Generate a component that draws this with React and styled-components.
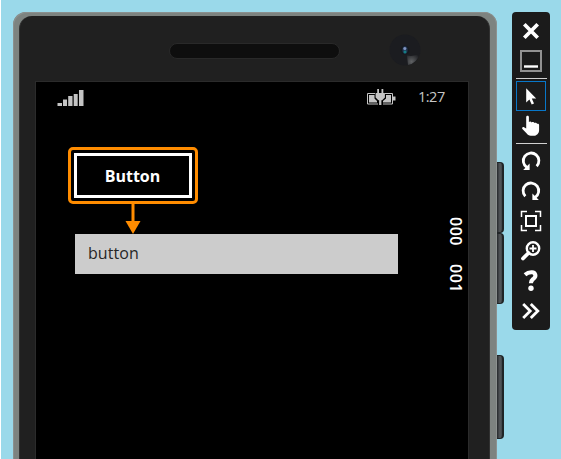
import React from "react";
import styled, { createGlobalStyle } from "styled-components";

const GlobalStyle = createGlobalStyle`
  * { box-sizing: border-box; }
  body { margin: 0; background: #9ad9ea; overflow: hidden; }
`;

const Desktop = styled.main`
  display: flex;
  align-items: flex-start;
  height: 459px;
  padding: 12px 0 0 12px;
  overflow: hidden;
  border-left: 1px solid #fff;
  background: #9ad9ea;
  font-family: "Open Sans", "Noto Sans", sans-serif;
`;

const PhoneFrame = styled.section`
  width: 484px;
  height: 520px;
  flex: none;
  padding: 4px 7px 0 6px;
  border-radius: 13px 13px 0 0;
  background: #7d8380;
  box-shadow: inset 1px 1px 0 #8b908e, inset -1px 0 0 #8d9290;
`;

const PhoneFace = styled.div`
  height: 100%;
  padding: 0 20px 0 16px;
  border-left: 1px solid #303030;
  border-right: 1px solid #303030;
  border-radius: 13px 13px 0 0;
  background: #202020;
`;

const Bezel = styled.header`
  display: flex;
  height: 65px;
  padding: 15px 0 0 133px;
`;

const Speaker = styled.div`
  width: 171px;
  height: 16px;
  margin-top: 12px;
  border: 1px solid #292929;
  border-radius: 8px;
  background: #0e0e0e;
`;

const CameraIcon = styled.svg`
  width: 32px;
  height: 32px;
  margin: 3px 0 0 49px;
`;

const Screen = styled.div`
  height: 439px;
  border: 1px solid #2b2b2b;
  border-bottom: 0;
  margin-left: -1px;
  background: #000;
`;

const StatusBar = styled.div`
  display: flex;
  align-items: center;
  height: 31px;
  padding: 0 22px 0 21px;
`;

const SignalIcon = styled.svg`
  width: 28px;
  height: 19px;
  flex: none;
  margin-top: -1px;
`;

const BatteryIcon = styled.svg`
  width: 31px;
  height: 18px;
  margin: -2px 0 0 auto;
`;

const Clock = styled.time`
  width: 28px;
  margin: -2px 0 0 21px;
  color: #c6c6c6;
  font: 14.5px/20px "Open Sans", sans-serif;
  letter-spacing: -0.5px;
  white-space: nowrap;
`;

const ScreenBody = styled.div`
  display: flex;
  justify-content: space-between;
  padding: 34px 4px 0 32px;
`;

const AppContent = styled.div`
  width: 330px;
`;

const Highlight = styled.div`
  width: 130px;
  height: 57px;
  padding: 3px;
  border: 3px solid #ff8c00;
  border-radius: 5px;
`;

const AppButton = styled.button`
  display: flex;
  align-items: center;
  justify-content: center;
  width: 118px;
  height: 45px;
  padding: 1px 1px 0 0;
  border: 3px solid #fff;
  background: #000;
  color: #fff;
  font: 700 16px/22px "Open Sans", sans-serif;
  letter-spacing: 0;
`;

const ArrowIcon = styled.svg`
  display: block;
  width: 16px;
  height: 30px;
  margin-left: 57px;
`;

const Output = styled.div`
  width: 323px;
  height: 40px;
  margin-left: 7px;
  padding: 8px 13px;
  background: #ccc;
  color: #262626;
  font: 16px/22px "Open Sans", sans-serif;
  letter-spacing: 0.05px;
`;

const FrameCounters = styled.div`
  display: flex;
  gap: 18.5px;
  width: 16px;
  padding-top: 70px;
  writing-mode: vertical-rl;
  color: #fff;
  font: 600 16px/16px "Open Sans", sans-serif;
  letter-spacing: 0.5px;
`;

const SideKeys = styled.div`
  width: 7px;
  flex: none;
  padding-top: 150px;
`;

const Key = styled.div`
  height: ${({ $height }) => $height}px;
  margin-top: ${({ $gap }) => $gap || 0}px;
  border: 1px solid #202527;
  border-left: 0;
  border-right-width: 2px;
  border-radius: 0 4px 4px 0;
  background: linear-gradient(90deg, #25292b, #55595c 60%, #3f4447);
`;

const Toolbar = styled.nav`
  display: flex;
  flex-direction: column;
  width: 38px;
  margin-left: 8px;
  padding: 4px;
  border-radius: 4px;
  background: #1b1b1b;
`;

const ToolButton = styled.button`
  width: 30px;
  height: 30px;
  padding: 0;
  border: 1px solid ${({ $active }) => ($active ? "#0877c9" : "transparent")};
  background: transparent;
`;

const ToolIcon = styled.svg`
  display: block;
  width: 28px;
  height: 28px;
  fill: none;
  stroke: #fff;
`;

const Divider = styled.hr`
  width: 31px;
  height: 1px;
  margin: 2px 0;
  border: 0;
  background: #d0d0d0;
`;

/* Every drawing is centred on 14,14 of a 28px grid. */
const tools = [
  { label: "Close", art: <path d="M7.3 7.3 20.7 20.7M20.7 7.3 7.3 20.7" strokeWidth="3.7" /> },
  {
    label: "Minimize",
    art: (
      <>
        <path d="M4 4h20v20H4z" stroke="#929292" strokeWidth="2" />
        <path d="M7 19.5h14" strokeWidth="2.4" />
      </>
    ),
    divider: true,
  },
  {
    label: "Pointer",
    active: true,
    art: <path d="M9.2 6.2v14.2l3.2-3 2.3 5 2.3-1-2.2-4.9h4.4z" fill="#fff" stroke="none" />,
  },
  {
    label: "Touch",
    art: (
      <path
        d="M9.2 5.2c0-1.9 2.7-1.9 2.7 0v4.9c.6-.8 2.3-.7 2.7.3.8-.7 2.4-.4 2.8.5.9-.6 2.5-.1 2.7.9 1-.4 2 .1 2 1.2v5.2c0 3-2.4 5.6-5.5 5.6h-2.8c-1.9 0-3.3-1-4.3-2.5L5.4 17c-1-1.3.8-2.5 2-1.6l1.8 1.2z"
        fill="#fff"
        stroke="none"
      />
    ),
    divider: true,
  },
  {
    label: "Rotate left",
    art: (
      <>
        <path d="M9.8 20.3A7.8 7.8 0 1 1 19.7 19.2" strokeWidth="2.8" />
        <path d="M12.6 16.6V23H6.2z" fill="#fff" stroke="none" />
      </>
    ),
  },
  {
    label: "Rotate right",
    art: (
      <>
        <path d="M18.2 20.3A7.8 7.8 0 1 0 8.3 19.2" strokeWidth="2.8" />
        <path d="M15.4 16.6V23H21.8z" fill="#fff" stroke="none" />
      </>
    ),
  },
  {
    label: "Fit to screen",
    art: (
      <>
        <path d="M9 9h10v10H9z" strokeWidth="2" />
        <path
          d="M4.5 10V4.5H10M18 4.5H23.5V10M23.5 18V23.5H18M10 23.5H4.5V18"
          stroke="#fff"
          strokeWidth="1.5"
        />
      </>
    ),
  },
  {
    label: "Zoom",
    art: (
      <>
        <circle cx="16" cy="11.5" r="6.2" strokeWidth="2.4" />
        <path d="M16 8v7M12.5 11.5h7" strokeWidth="1.8" />
        <path d="M11.5 16 6 21.5" strokeWidth="3.8" strokeLinecap="round" />
      </>
    ),
  },
  {
    label: "Help",
    art: (
      <>
        <path
          d="M8 7.7C10 6 12.3 5.1 15 5.3c3.7.3 4.2 3.9 2.2 5.8-1.8 1.8-3.2 2-3.3 5.1"
          strokeWidth="4.1"
        />
        <circle cx="14" cy="21.3" r="2.7" fill="#fff" stroke="none" />
      </>
    ),
  },
  {
    label: "More tools",
    art: <path d="m6.2 7 7 7-7 7M13.8 7l7 7-7 7" strokeWidth="2.8" />,
  },
];

function Signal() {
  return (
    <SignalIcon viewBox="0 0 28 19" fill="#c4c4c4">
      <path d="M.5 15h4.5v3H.5zM6 11.5h4V18H6zM11.2 8h4.3v10h-4.3zM16.7 6h4v12h-4zM22 2h4.5v16H22z" />
    </SignalIcon>
  );
}

function Battery() {
  return (
    <BatteryIcon viewBox="0 0 31 18">
      <path d="M9 5.5H1.5v10.5H12M17 16h9.5V5.5H19" fill="none" stroke="#c4c4c4" />
      <path d="M3 7h5.5v3.5l2.5 2.5v1.5H3zM20 7h5v7.5h-8V13l3-2.5zM27 8.5h2.5v4H27z" fill="#c4c4c4" />
      <path d="M11.2 1h1.8v4h2.5V1h1.8v4h1.6v4.5l-2.8 2.8h-.7V17h-2.3v-4.7h-.7L9.6 9.5V5h1.6z" fill="#c4c4c4" />
    </BatteryIcon>
  );
}

function Camera() {
  return (
    <CameraIcon viewBox="0 0 32 32">
      <defs>
        <radialGradient id="glint" cx="22.5" cy="27.5" r="9" gradientUnits="userSpaceOnUse">
          <stop offset="0" stopColor="#606264" />
          <stop offset="1" stopColor="#1b1c20" />
        </radialGradient>
      </defs>
      <circle cx="16" cy="16" r="15.5" fill="#1b1c20" />
      <path d="M18 21.5 22 22l8.5-1.5A15.5 15.5 0 0 1 19 31.1z" fill="url(#glint)" />
      <circle cx="16" cy="16" r="4.5" fill="#15191e" />
      <ellipse cx="16" cy="16" rx="2.6" ry="3.7" fill="#233653" />
      <circle cx="15.8" cy="14.5" r="1.5" fill="#8295c2" />
      <circle cx="16" cy="18" r="1.4" fill="#147e83" />
    </CameraIcon>
  );
}

export default function App() {
  return (
    <>
      <GlobalStyle />
      <Desktop>
        <PhoneFrame>
          <PhoneFace>
            <Bezel>
              <Speaker />
              <Camera />
            </Bezel>
            <Screen>
              <StatusBar>
                <Signal />
                <Battery />
                <Clock>1:27</Clock>
              </StatusBar>
              <ScreenBody>
                <AppContent>
                  <Highlight>
                    <AppButton>Button</AppButton>
                  </Highlight>
                  <ArrowIcon viewBox="0 0 16 30">
                    <path d="M8 0v18" stroke="#ff8c00" strokeWidth="3" />
                    <path d="M.5 17h15L8 30z" fill="#ff8c00" />
                  </ArrowIcon>
                  <Output>button</Output>
                </AppContent>
                <FrameCounters>
                  <span>000</span>
                  <span>001</span>
                </FrameCounters>
              </ScreenBody>
            </Screen>
          </PhoneFace>
        </PhoneFrame>
        <SideKeys>
          <Key $height={71} />
          <Key $height={71} />
          <Key $height={84} $gap={51} />
        </SideKeys>
        <Toolbar>
          {tools.map(({ label, art, active, divider }) => (
            <React.Fragment key={label}>
              <ToolButton $active={active} aria-label={label}>
                <ToolIcon viewBox="0 0 28 28">{art}</ToolIcon>
              </ToolButton>
              {divider && <Divider />}
            </React.Fragment>
          ))}
        </Toolbar>
      </Desktop>
    </>
  );
}
